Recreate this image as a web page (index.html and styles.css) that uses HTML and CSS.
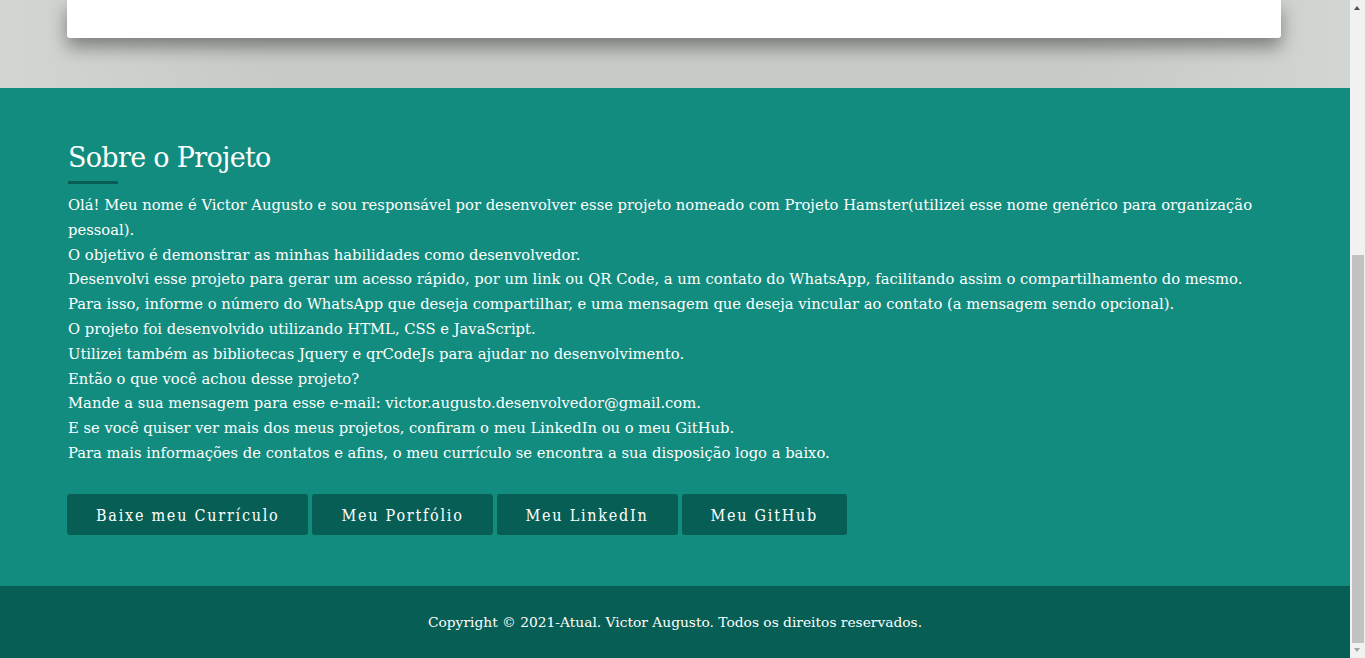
FILE: index.html
```html
<!DOCTYPE html>
<html lang="pt-BR">
<head>
<meta charset="utf-8">
<title>Projeto Hamster</title>
<link rel="stylesheet" href="styles.css">
</head>
<body>
<div class="page">
  <div class="top">
    <div class="card"></div>
  </div>
  <section class="about">
    <div class="container">
      <h2 class="title">Sobre o Projeto</h2>
      <p class="text">Olá! Meu nome é Victor Augusto e sou responsável por desenvolver esse projeto nomeado com Projeto Hamster(utilizei esse nome genérico para organização pessoal).<br>
O objetivo é demonstrar as minhas habilidades como desenvolvedor.<br>
Desenvolvi esse projeto para gerar um acesso rápido, por um link ou QR Code, a um contato do WhatsApp, facilitando assim o compartilhamento do mesmo.<br>
Para isso, informe o número do WhatsApp que deseja compartilhar, e uma mensagem que deseja vincular ao contato (a mensagem sendo opcional).<br>
O projeto foi desenvolvido utilizando HTML, CSS e JavaScript.<br>
Utilizei também as bibliotecas Jquery e qrCodeJs para ajudar no desenvolvimento.<br>
Então o que você achou desse projeto?<br>
Mande a sua mensagem para esse e-mail: victor.augusto.desenvolvedor@gmail.com.<br>
E se você quiser ver mais dos meus projetos, confiram o meu LinkedIn ou o meu GitHub.<br>
Para mais informações de contatos e afins, o meu currículo se encontra a sua disposição logo a baixo.</p>
      <div class="buttons">
        <a class="btn" href="#">Baixe meu Currículo</a>
        <a class="btn" href="#">Meu Portfólio</a>
        <a class="btn" href="#">Meu LinkedIn</a>
        <a class="btn" href="#">Meu GitHub</a>
      </div>
    </div>
  </section>
  <footer class="footer">Copyright © 2021-Atual. Victor Augusto. Todos os direitos reservados.</footer>
</div>
<div class="scrollbar">
  <div class="arrow arrow-up"></div>
  <div class="track"><div class="thumb"></div></div>
  <div class="arrow arrow-down"></div>
</div>
</body>
</html>
```
FILE: styles.css
```css
html, body {
  margin: 0;
  padding: 0;
  height: 658px;
  overflow: hidden;
}
body {
  font-family: "DejaVu Serif", "Liberation Serif", serif;
  color: #fff;
}
.page {
  width: calc(100% - 15px);
}
.top {
  height: 88px;
  background: linear-gradient(to right, #d2d6d2, #c6cbc6 20%, #c6cbc6 80%, #d2d6d2);
  padding: 0 69px 0 67px;
  box-sizing: border-box;
}
.card {
  height: 38px;
  background: #fff;
  border-radius: 0 0 3px 3px;
  box-shadow: 0 9px 18px rgba(0, 0, 0, 0.4);
}
.about {
  background: #128c7e;
  height: 498px;
  box-sizing: border-box;
  padding-top: 52px;
}
.container {
  padding: 0 69px 0 67px;
}
.title {
  margin: 0;
  font-weight: normal;
  font-size: 27px;
  letter-spacing: -0.7px;
  line-height: 36px;
  padding-left: 1px;
}
.title::after {
  content: "";
  display: block;
  width: 50px;
  height: 3px;
  background: #075e54;
  margin-top: 5px;
}
.text {
  margin: 9px 0 0 1px;
  font-size: 14.75px;
  line-height: 24.8px;
}
.buttons {
  display: flex;
  gap: 4px;
  margin-top: 28px;
}
.btn {
  display: block;
  height: 41px;
  line-height: 43px;
  padding: 0 29px;
  background: #075e54;
  color: #fff;
  text-decoration: none;
  border-radius: 3px;
  font-family: "DejaVu Serif Condensed", "DejaVu Serif", serif;
  font-stretch: condensed;
  font-size: 16px;
  letter-spacing: 1.75px;
}
.footer {
  background: #075e54;
  height: 72px;
  line-height: 72px;
  text-align: center;
  font-size: 13.8px;
}
.scrollbar {
  position: fixed;
  top: 0;
  right: 0;
  width: 15px;
  height: 658px;
  background: #f1f1f1;
  display: flex;
  flex-direction: column;
}
.arrow {
  height: 15px;
  position: relative;
}
.arrow::after {
  content: "";
  position: absolute;
  left: 4px;
  border-left: 3.5px solid transparent;
  border-right: 3.5px solid transparent;
}
.arrow-up::after {
  top: 6px;
  border-bottom: 4px solid #505050;
}
.arrow-down::after {
  top: 5px;
  border-top: 4px solid #a3a3a3;
}
.track {
  flex: 1;
  position: relative;
}
.thumb {
  position: absolute;
  left: 2px;
  right: 1px;
  top: 240px;
  bottom: 0;
  background: #c1c1c1;
}
```
